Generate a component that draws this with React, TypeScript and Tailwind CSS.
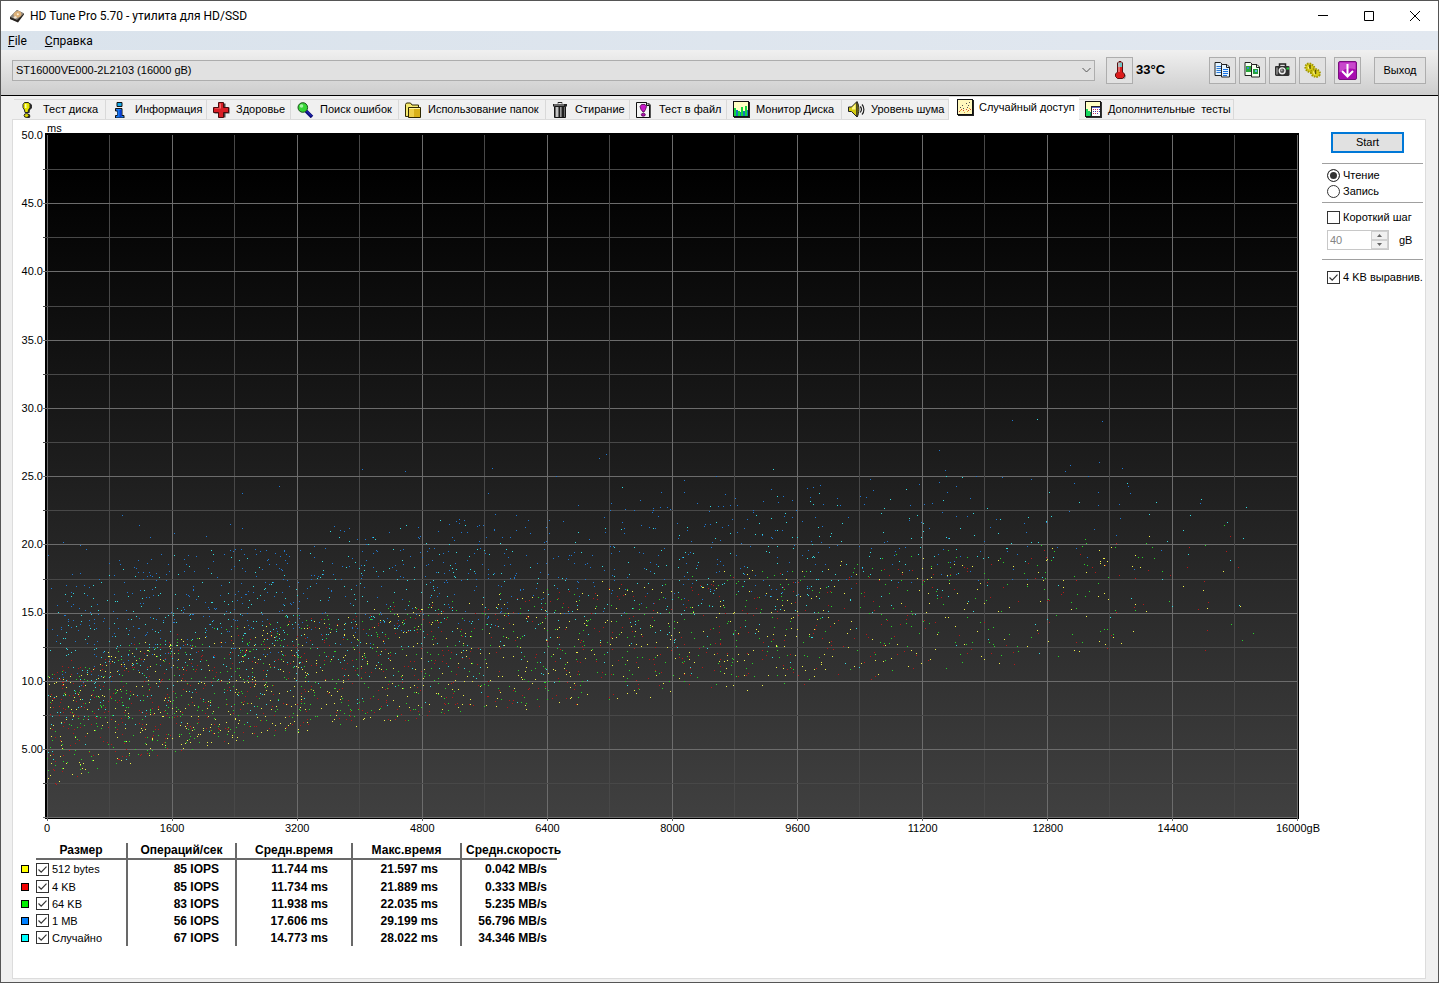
import React, { useState } from 'react';

type IconProps = { className?: string };

// ---------- icons ----------

const DiskIcon = ({ className }: IconProps) => (
  <svg className={className} viewBox="0 0 16 16" width="16" height="16">
    <path d="M1 9 8 2l7 3.500-6 8L1 11z" fill="#5a5a5a" />
    <path d="M1 9 8 2l7 3.500-7 6.500z" fill="#8b857c" />
    <path d="M1 9v2l8 3.500 6-8v-1l-7 6.500z" fill="#26221f" />
    <ellipse cx="8.500" cy="6.400" rx="4" ry="3.200" fill="#dcb078" transform="rotate(-25 8.500 6.400)" />
    <circle cx="8.800" cy="6.200" r="1" fill="#fff3dd" />
    <path d="m4 9 3-1 1 2-2 .8z" fill="#efe2d0" />
  </svg>
);

const TestIcon = () => (
  <svg viewBox="0 0 16 16" width="16" height="16">
    <path d="M6 1h4l2 2v3l-2 2-.5 3h-2L7 8 5 6V3z" fill="#333" />
    <circle cx="8" cy="14" r="2.300" fill="#333" />
    <path d="M4.500 .5h4l1.500 2v3L8.500 8 8 10.500H5L4.500 8 3 5.500v-3z" fill="#e6e600" stroke="#222" />
    <path d="M5 2h1.500v4H5z" fill="#ffffb0" />
    <ellipse cx="6.500" cy="13.500" rx="2.400" ry="1.900" fill="#e0dc00" stroke="#222" />
  </svg>
);

const InfoIcon = () => (
  <svg viewBox="0 0 16 16" width="16" height="16">
    <path d="M5 .500h5v4H5zM3.500 6.500H10v7h2v2.500H3.500v-2.500h2V9h-2z" fill="#111" stroke="#111" />
    <path d="M5.500 1h4v3h-4z" fill="#14a8e8" />
    <path d="M4 7h5.500v7h2v1.500H4V14h1.500V8.500H4z" fill="#1878f0" />
    <path d="M7.500 8h2v7h-2z" fill="#0a3bd8" />
  </svg>
);

const HealthIcon = () => (
  <svg viewBox="0 0 17 16" width="17" height="16">
    <path d="M6.500 1.500h6v4h4v6h-4v4h-6v-4h-5v-6h5z" fill="#444" />
    <path d="M5.500 .5h5v5h5v5h-5v5h-5v-5h-5v-5h5z" fill="#d81f26" stroke="#4c0a0c" />
    <path d="M6.500 1.500h1.500v5h-6V6h4.500z" fill="#ee7070" />
  </svg>
);

const SearchIcon = () => (
  <svg viewBox="0 0 17 16" width="17" height="16">
    <path d="m9 9 6 6" stroke="#0a0a78" strokeWidth="3.500" />
    <path d="m9.500 9 5 5" stroke="#2a35d0" strokeWidth="1" />
    <circle cx="5.800" cy="5.500" r="4.800" fill="#36d636" stroke="#1a4f1a" />
    <circle cx="4.500" cy="4" r="1.800" fill="#a4f5a4" />
  </svg>
);

const FolderIcon = () => (
  <svg viewBox="0 0 16 16" width="16" height="16">
    <path d="M.500 14.500v-12l1-1.500h4l1.500 2h6.500v11z" fill="#f6ea70" stroke="#2e2600" />
    <path d="M3.500 15.500v-10h12v10z" fill="#d8b018" stroke="#2e2600" />
    <path d="M4 6h5v9H4z" fill="#efcf48" />
    <path d="M4 6h11v1H4z" fill="#fff5a0" />
  </svg>
);

const TrashIcon = () => (
  <svg viewBox="0 0 16 16" width="16" height="16">
    <path d="M2.500 4.500h11v11h-11z" fill="#6c6c6c" stroke="#151515" />
    <path d="M4 5h2v10H4z" fill="#c4c4c4" />
    <path d="M7 5h1v10H7zM10 5h2v10h-2z" fill="#202020" />
    <path d="M8 5h1v10H8z" fill="#999" />
    <path d="M1 2h14v2.500H1z" fill="#222" />
    <path d="M2 2.500h10v1H2z" fill="#aaa" />
    <path d="M6 1.500V.500h4v1" fill="none" stroke="#222" />
  </svg>
);

const FileTestIcon = () => (
  <svg viewBox="0 0 16 16" width="16" height="16">
    <path d="M2 1h11l2 2v13H2z" fill="#555" />
    <path d="M.5 .5h10l3 3v12H.5z" fill="#f4f4f4" stroke="#111" />
    <path d="M10.500 .5v3h3" fill="#ccc" stroke="#111" />
    <path d="M5.500 2.500h3.500l1.500 2-1 3L8 10H7L5 7.500l-1-3z" fill="#c818c8" stroke="#480048" strokeWidth=".8" />
    <ellipse cx="7.300" cy="12.700" rx="2" ry="1.500" fill="#b010b0" stroke="#480048" strokeWidth=".8" />
  </svg>
);

const MonitorIcon = () => (
  <svg viewBox="0 0 17 17" width="17" height="17" shapeRendering="crispEdges">
    <path d="M1 1h16v16H1z" fill="#222" />
    <path d="M0 0h16v16H0z" fill="#111" />
    <path d="M1 1h14v14H1z" fill="#ffffc4" />
    <path d="M1 7h2v8H1zM5 10h2v5H5zM8 6h2v9H8zM12 5h2v10h-2z" fill="#12d83c" />
    <path d="M3 9h2v6H3zM7 11h1v4H7zM10 10h2v5h-2zM14 9h1v6h-1z" fill="#1478b8" />
  </svg>
);

const SoundIcon = () => (
  <svg viewBox="0 0 17 17" width="17" height="17">
    <path d="M.500 6v4.500h3L9 16V.5L3.500 6z" fill="#d6cc10" stroke="#222" />
    <path d="M4 6.500 7.500 3v5.500H4z" fill="#fff88a" />
    <path d="M9 1c2.500 3 2.500 11.500 0 15z" fill="#a89c00" stroke="#222" />
    <path d="M12.200 5.500c1.500 1.500 1.500 4 0 6M14 3.500c2.500 2.500 2.500 7.500 0 10" fill="none" stroke="#222" strokeWidth="1.200" />
  </svg>
);

const ScatterIcon = () => (
  <svg viewBox="0 0 17 17" width="17" height="17" shapeRendering="crispEdges">
    <path d="M1 1h16v16H1z" fill="#222" />
    <path d="M0 0h16v16H0z" fill="#111" />
    <path d="M1 1h14v14H1z" fill="#fff8bc" />
    <path d="M3 8h1v1H3zM5 6h1v1H5zM9 4h1v1H9zM11 6h1v1h-1zM12 3h1v1h-1zM6 9h1v1H6zM10 8h1v1h-1z" fill="#555" />
    <path d="M2 12h1v1H2zM4 10h1v1H4zM6 11h1v1H6zM9 10h1v1H9zM11 11h1v1h-1zM13 10h1v1h-1z" fill="#d04838" />
    <path d="M3 11h1v1H3zM7 13h1v1H7zM10 12h1v1h-1zM12 9h1v1h-1z" fill="#e8a838" />
  </svg>
);

const ExtraIcon = () => (
  <svg viewBox="0 0 17 17" width="17" height="17" shapeRendering="crispEdges">
    <path d="M1 1h16v16H1z" fill="#333" />
    <path d="M0 0h16v16H0z" fill="#111" />
    <path d="M1 1h14v14H1z" fill="#ffffc4" />
    <path d="M1 8h2v7H1zM3 10h2v5H3z" fill="#18d860" />
    <path d="M5 11h2v4H5z" fill="#089060" />
    <path d="M6 5h10v11H6z" fill="#222" />
    <path d="M7 7h8v8H7z" fill="#fff" />
    <path d="M7 6h8v1H7z" fill="#5868c8" />
    <path d="M8 8h1v1H8zM10 8h1v1h-1zM12 8h1v1h-1zM8 12h1v1H8zM10 12h1v1h-1zM12 10h1v1h-1z" fill="#c03060" />
    <path d="M8 10h1v1H8zM10 10h1v1h-1zM12 12h1v1h-1zM14 8h1v1h-1zM14 10h1v1h-1z" fill="#4040b0" />
  </svg>
);

const ThermometerIcon = () => (
  <svg viewBox="0 0 16 18" width="16" height="18">
    <path d="M9.500 1v11l2 1.500-1 3.500H4l9 .8 1-3.500-3-2V2z" fill="#888" />
    <path d="M5.500 2 7 .500h2L10.500 2v9l2 2v2.500l-2 2H5.500l-2-2V13l2-2z" fill="#dc1c1c" stroke="#5b1010" />
    <path d="M6 1.500h4V6H6z" fill="#6cc4c4" />
    <path d="M6.500 2h1v9h-1z" fill="#f6b4b4" />
  </svg>
);

const CopyTextIcon = () => (
  <svg viewBox="0 0 17 16" width="17" height="16">
    <path d="M1 .500h5.500l2 2v11H1z" fill="#e4f4ff" stroke="#222" />
    <path d="M2.500 4.500H7M2.500 6.500H7M2.500 8.500H7M2.500 10.500H7" stroke="#2878d8" />
    <path d="M7.500 2.500H13l2.500 2.500v10h-8z" fill="#e4f4ff" stroke="#222" />
    <path d="M12.500 2.500v3h3" fill="none" stroke="#222" />
    <path d="M9 7.500h5M9 9.500h5M9 11.500h5M9 13.500h4" stroke="#1870e0" />
  </svg>
);

const CopyImageIcon = () => (
  <svg viewBox="0 0 17 16" width="17" height="16">
    <path d="M1 .500h5.500l2 2v11H1z" fill="#f4fff0" stroke="#222" />
    <path d="M2 4h5v6H2z" fill="#28a838" />
    <path d="M3 5h2v2H3z" fill="#3888d0" />
    <path d="M7.500 2.500H13l2.500 2.500v10h-8z" fill="#f4fff0" stroke="#222" />
    <path d="M12.500 2.500v3h3" fill="none" stroke="#222" />
    <path d="M9 7h5v5H9z" fill="#20a040" />
    <path d="M11 8h2v2h-2z" fill="#60b8e8" />
  </svg>
);

const CameraIcon = () => (
  <svg viewBox="0 0 17 16" width="17" height="16">
    <path d="M5.500 4V2h6v2" fill="#ddd" stroke="#222" strokeWidth="1.500" />
    <path d="M1 4.500 2 4h12.500l1 .5V13l-1 1H2l-1-1z" fill="#303030" />
    <path d="M2 5.500h2v7H2z" fill="#777" />
    <circle cx="8.200" cy="8.800" r="3.600" fill="#f0f0f0" />
    <circle cx="8.200" cy="8.800" r="2.200" fill="#555" />
    <circle cx="7.700" cy="8.200" r="1" fill="#aaa" />
    <path d="M12.500 5.500H15v2h-2.500z" fill="#20d040" />
  </svg>
);

const GearsIcon = () => (
  <svg viewBox="0 0 17 17" width="17" height="17">
    <ellipse cx="6" cy="6" rx="5" ry="4" transform="rotate(40 6 6)" fill="#d8cc18" stroke="#a09600" strokeWidth="2" strokeDasharray="1.500 1" />
    <ellipse cx="11.500" cy="11" rx="4.600" ry="3.800" transform="rotate(25 11.500 11)" fill="#d8cc18" stroke="#a09600" strokeWidth="2" strokeDasharray="1.500 1" />
    <path d="M6 3v4M11.500 8v4" stroke="#5c5500" strokeWidth="1.500" />
    <path d="M4 4.500 5 7M9.500 9.500l1 3" stroke="#fff9a0" />
  </svg>
);

const DownloadIcon = () => (
  <svg viewBox="0 0 19 19" width="19" height="19">
    <rect x=".5" y=".5" width="18" height="18" rx="1.500" fill="#a80cb0" stroke="#77107c" />
    <path d="M1.500 1.500h16v7c-5-2-11-1-16 3z" fill="#c848cc" />
    <path d="M9.500 3v12.500M4 10l5.500 5.500L15 10" fill="none" stroke="#fff" strokeWidth="2" />
  </svg>
);

const CheckMark = () => (
  <svg
    className="pointer-events-none absolute inset-0 hidden peer-checked:block"
    viewBox="0 0 13 13"
    width="13"
    height="13"
  >
    <path d="m2.500 6.500 2.700 2.700 5.300-5.500" fill="none" stroke="#333" strokeWidth="1.200" />
  </svg>
);

// ---------- data ----------

const tabs = [
  { label: 'Тест диска', icon: <TestIcon />, width: 'w-[92px]' },
  { label: 'Информация', icon: <InfoIcon />, width: 'w-[101px]' },
  { label: 'Здоровье', icon: <HealthIcon />, width: 'w-[84px]' },
  { label: 'Поиск ошибок', icon: <SearchIcon />, width: 'w-[108px]' },
  { label: 'Использование папок', icon: <FolderIcon />, width: 'w-[147px]' },
  { label: 'Стирание', icon: <TrashIcon />, width: 'w-[84px]' },
  { label: 'Тест в файл', icon: <FileTestIcon />, width: 'w-[97px]' },
  { label: 'Монитор Диска', icon: <MonitorIcon />, width: 'w-[115px]' },
  { label: 'Уровень шума', icon: <SoundIcon />, width: 'w-[107px]' },
  { label: 'Случайный доступ', icon: <ScatterIcon />, width: 'w-[130px]' },
  { label: 'Дополнительные  тесты', icon: <ExtraIcon />, width: 'w-[155px]' },
];

const rows = [
  { id: 's512', size: '512 bytes', swatch: 'bg-[#ffff00]', iops: '85 IOPS', avg: '11.744 ms', max: '21.597 ms', speed: '0.042 MB/s' },
  { id: 's4k', size: '4 KB', swatch: 'bg-[#f00000]', iops: '85 IOPS', avg: '11.734 ms', max: '21.889 ms', speed: '0.333 MB/s' },
  { id: 's64k', size: '64 KB', swatch: 'bg-[#00f000]', iops: '83 IOPS', avg: '11.938 ms', max: '22.035 ms', speed: '5.235 MB/s' },
  { id: 's1m', size: '1 MB', swatch: 'bg-[#0080ff]', iops: '56 IOPS', avg: '17.606 ms', max: '29.199 ms', speed: '56.796 MB/s' },
  { id: 'rnd', size: 'Случайно', swatch: 'bg-[#00ffff]', iops: '67 IOPS', avg: '14.773 ms', max: '28.022 ms', speed: '34.346 MB/s' },
];

// extra = transfer time on top of the seek, in ms
const series = [
  { id: 's1m', color: '#1f78d2', count: 800, seed: 41, extra: 6.2, spread: 0 },
  { id: 'rnd', color: '#35dce0', count: 800, seed: 52, extra: 0, spread: 6.4 },
  { id: 's4k', color: '#b81818', count: 800, seed: 23, extra: 0, spread: 0 },
  { id: 's64k', color: '#28d428', count: 800, seed: 34, extra: 0.2, spread: 0 },
  { id: 's512', color: '#f2f24c', count: 800, seed: 15, extra: 0, spread: 0 },
];

const yLabels = ['50.0', '45.0', '40.0', '35.0', '30.0', '25.0', '20.0', '15.0', '10.0', '5.00', ''];
const xLabels = ['0', '1600', '3200', '4800', '6400', '8000', '9600', '11200', '12800', '14400', '16000gB'];

function makeRandom(seed: number) {
  let s = seed * 7919;
  return () => {
    s = (s + 0x6d2b79f5) | 0;
    let t = Math.imul(s ^ (s >>> 15), 1 | s);
    t = (t + Math.imul(t ^ (t >>> 7), 61 | t)) ^ t;
    return ((t ^ (t >>> 14)) >>> 0) / 4294967296;
  };
}

// Seek distance is triangular, latency is seek time + part of one rotation
function scatterPath(s: (typeof series)[number]) {
  const rand = makeRandom(s.seed);
  let d = '';
  for (let i = 0; i < s.count; i++) {
    const dist = 1 - Math.sqrt(rand());
    const seek = 1.5 + 8 * Math.sqrt(dist) + 3 * dist + rand() * 0.9;
    const late = rand() < 0.09 && (s.extra > 1 || s.spread) ? rand() * 5 : 0;
    const ms = Math.min(seek + rand() * 8.33 + s.extra + rand() * s.spread + late, 29.2);
    const x = Math.round(4 + dist * 1250);
    const y = Math.round(684 - ms * 13.64);
    d += `M${x} ${y}h1v1h-1z`;
  }
  return d;
}

const steps = Array.from({ length: 21 }, (_, i) => i);

// ---------- parts ----------

function ScatterChart({ visible }: { visible: Record<string, boolean> }) {
  return (
    <div className="flex min-h-0 flex-1 text-[11px] leading-3">
      <div className="flex w-[30px] shrink-0 flex-col justify-between pb-[18px] pt-3">
        {yLabels.map((label, i) => (
          <div key={i} className="flex h-0 items-center justify-end">{label}</div>
        ))}
      </div>
      <div className="flex min-w-0 flex-1 flex-col">
        <div className="h-[10px] pl-1 leading-[10px]">ms</div>
        <svg
          className="min-h-0 w-full flex-1"
          viewBox="0 0 1256 688"
          preserveAspectRatio="none"
          shapeRendering="crispEdges"
          role="img"
          aria-label="Время доступа, ms"
        >
          <defs>
            <linearGradient id="plot" x1="0" y1="0" x2="0" y2="1">
              <stop offset="0.05" stopColor="#000" />
              <stop offset="1" stopColor="#404040" />
            </linearGradient>
          </defs>
          <rect x="2" y="0" width="1254" height="686" fill="#000" />
          <rect x="4" y="2" width="1250" height="682" fill="url(#plot)" />
          {steps.map(i => (
            <g key={i} fill={i % 2 ? '#484848' : '#6c6c6c'}>
              <rect x={4 + Math.floor(i * 62.5)} y="2" width="1" height={i % 2 ? 683 : 686} />
              {i > 0 && <rect x="0" y={2 + Math.round(i * 34.12)} width="1254" height="1" />}
            </g>
          ))}
          {series.map(s => visible[s.id] && <path key={s.id} d={scatterPath(s)} fill={s.color} />)}
        </svg>
        <div className="flex h-[14px] items-center justify-between pl-1 pr-px">
          {xLabels.map(label => (
            <div key={label} className="flex w-0 justify-center whitespace-nowrap">{label}</div>
          ))}
        </div>
      </div>
    </div>
  );
}

const toolButton =
  'flex size-[27px] items-center justify-center border border-[#adadad] bg-[#e1e1e1] hover:border-[#0078d7]';
const checkBox = 'peer block size-[13px] appearance-none border border-[#333] bg-white';

const App: React.FC = () => {
  const [activeTab, setActiveTab] = useState('Случайный доступ');
  const [mode, setMode] = useState('read');
  const [shortStroke, setShortStroke] = useState(false);
  const [aligned, setAligned] = useState(true);
  const [visible, setVisible] = useState<Record<string, boolean>>({
    s512: true,
    s4k: true,
    s64k: true,
    s1m: true,
    rnd: true,
  });

  return (
    <div className="flex h-screen min-h-[600px] flex-col border border-[#555] bg-[#f0f0f0] font-['Liberation_Sans',Arial,sans-serif] text-[11px] text-black">
      {/* Title bar */}
      <header className="flex h-[30px] shrink-0 items-center bg-white pl-2 font-['Roboto','Segoe_UI',sans-serif] text-xs">
        <DiskIcon />
        <h1 className="ml-[5px] flex-1">HD Tune Pro 5.70 - утилита для HD/SSD</h1>
        <button className="flex h-full w-[46px] items-center justify-center" aria-label="Свернуть">
          <svg width="10" height="10" viewBox="0 0 10 10"><path d="M0 4.500h10" stroke="#000" /></svg>
        </button>
        <button className="flex h-full w-[46px] items-center justify-center" aria-label="Развернуть">
          <svg width="10" height="10" viewBox="0 0 10 10"><path d="M.5 .5h9v9h-9z" fill="none" stroke="#000" /></svg>
        </button>
        <button className="flex h-full w-[46px] items-center justify-center" aria-label="Закрыть">
          <svg width="10" height="10" viewBox="0 0 10 10"><path d="m0 0 10 10M10 0 0 10" stroke="#000" /></svg>
        </button>
      </header>

      {/* Menu */}
      <nav className="flex h-[19px] shrink-0 items-center gap-[18px] bg-linear-to-r from-[#dae3ec] to-[#e2e8f0] pl-[7px] font-['Roboto','Segoe_UI',sans-serif] text-xs">
        <button><span className="underline">F</span>ile</button>
        <button><span className="underline">С</span>правка</button>
      </nav>

      {/* Toolbar */}
      <div className="flex h-[46px] shrink-0 items-center border-b border-black bg-linear-to-b from-[#f0f0f0] to-[#cdcdcd] pb-[5px] pl-[11px] pr-3">
        <div className="relative min-w-0 flex-1">
          <select
            className="block h-[21px] w-full appearance-none border border-[#adadad] bg-[#e1e1e1] pl-[3px] text-[11px]"
            aria-label="Диск"
          >
            <option>ST16000VE000-2L2103 (16000 gB)</option>
          </select>
          <svg className="pointer-events-none absolute right-1 top-[7px]" width="9" height="7" viewBox="0 0 9 7">
            <path d="m.5 1 4 4 4-4" fill="none" stroke="#555" />
          </svg>
        </div>
        <button className={`${toolButton} ml-[11px]`} aria-label="Температура"><ThermometerIcon /></button>
        <span className="ml-[3px] w-[73px] text-[13px] font-bold">33°C</span>
        <div className="flex gap-[3px]">
          <button className={toolButton} aria-label="Копировать текст"><CopyTextIcon /></button>
          <button className={toolButton} aria-label="Копировать снимок"><CopyImageIcon /></button>
          <button className={toolButton} aria-label="Сохранить снимок"><CameraIcon /></button>
          <button className={toolButton} aria-label="Настройки"><GearsIcon /></button>
        </div>
        <button className={`${toolButton} ml-2`} aria-label="Свернуть в трей"><DownloadIcon /></button>
        <button className="ml-[13px] h-[27px] w-[52px] border border-[#adadad] bg-[#e1e1e1]">Выход</button>
      </div>

      <main className="flex min-h-0 flex-1 flex-col px-[11px] pb-[3px]">
        {/* Tabs */}
        <div className="flex h-[23px] shrink-0 items-end pl-0.5" role="tablist">
          {tabs.map(tab => {
            const active = tab.label === activeTab;
            return (
              <button
                key={tab.label}
                role="tab"
                aria-selected={active}
                onClick={() => setActiveTab(tab.label)}
                className={`${tab.width} flex shrink-0 items-center whitespace-pre border-t border-[#d9d9d9] ${
                  active ? 'z-10 -mb-px h-6 bg-white pb-0.5 pl-2' : 'h-5 border-r pl-1.5'
                }`}
              >
                <span className={active ? 'flex w-[22px] shrink-0' : 'flex w-[23px] shrink-0'}>{tab.icon}</span>
                {tab.label}
              </button>
            );
          })}
        </div>

        <div className="mr-px flex min-h-0 flex-1 border border-[#dcdcdc] bg-white">
          <section className="flex min-w-0 flex-1 flex-col pt-[3px]">
            <ScatterChart visible={visible} />

            <table className="mb-8 ml-2 mt-2 w-[536px] shrink-0 table-fixed border-collapse text-xs font-bold">
              <colgroup>
                <col className="w-[15px]" />
                <col className="w-[91px]" />
                <col className="w-[109px]" />
                <col className="w-[116px]" />
                <col className="w-[109px]" />
                <col />
              </colgroup>
              <thead>
                <tr className="h-4 leading-[13px]">
                  <td />
                  <th className="border-b-2 border-r-2 border-[#696969]">Размер</th>
                  <th className="border-b-2 border-r-2 border-[#696969]">Операций/сек</th>
                  <th className="border-b-2 border-r-2 border-[#696969]">Средн.время</th>
                  <th className="border-b-2 border-r-2 border-[#696969]">Макс.время</th>
                  <th className="whitespace-nowrap border-b-2 border-[#696969] pl-1 text-left">Средн.скорость</th>
                </tr>
              </thead>
              <tbody>
                {rows.map(row => (
                  <tr key={row.id} className="h-[17px] text-right leading-4 first:h-[19px]">
                    <td><span className={`block size-2 border border-black ${row.swatch}`} /></td>
                    <td className="border-r-2 border-[#696969] text-[11px] font-normal">
                      <label className="flex items-center gap-[3px]">
                        <span className="relative">
                          <input
                            type="checkbox"
                            className={checkBox}
                            checked={visible[row.id]}
                            onChange={e => setVisible({ ...visible, [row.id]: e.target.checked })}
                          />
                          <CheckMark />
                        </span>
                        {row.size}
                      </label>
                    </td>
                    <td className="border-r-2 border-[#696969] pr-4">{row.iops}</td>
                    <td className="border-r-2 border-[#696969] pr-[23px]">{row.avg}</td>
                    <td className="border-r-2 border-[#696969] pr-[22px]">{row.max}</td>
                    <td className="pr-2.5">{row.speed}</td>
                  </tr>
                ))}
              </tbody>
            </table>
          </section>

          {/* Test options */}
          <aside className="ml-[23px] mr-0.5 w-[101px] shrink-0 pt-3">
            <button className="ml-[9px] block h-[21px] w-[73px] border-2 border-[#0078d7] bg-[#e1e1e1]">Start</button>
            <fieldset className="mt-2.5 border-y border-[#a0a0a0] py-[3px] pl-[5px]">
              {[
                { id: 'read', label: 'Чтение' },
                { id: 'write', label: 'Запись' },
              ].map(item => (
                <label key={item.id} className="flex h-4 items-center gap-[3px]">
                  <input
                    type="radio"
                    name="mode"
                    className="size-[13px] appearance-none rounded-full border border-[#333] bg-white checked:bg-[#333] checked:shadow-[inset_0_0_0_2px_#fff]"
                    checked={mode === item.id}
                    onChange={() => setMode(item.id)}
                  />
                  {item.label}
                </label>
              ))}
            </fieldset>
            <div className="border-b border-[#a0a0a0] pb-[9px] pl-[5px] pt-1.5">
              <label className="flex h-4 items-center gap-[3px] whitespace-nowrap">
                <span className="relative">
                  <input
                    type="checkbox"
                    className={checkBox}
                    checked={shortStroke}
                    onChange={e => setShortStroke(e.target.checked)}
                  />
                  <CheckMark />
                </span>
                Короткий шаг
              </label>
              <div className="mt-[5px] flex items-center">
                <div className="flex h-5 w-[62px] border border-[#c8c8c8]">
                  <input
                    id="stroke"
                    className="w-0 flex-1 bg-white pl-0.5 text-[#838383]"
                    defaultValue="40"
                    disabled={!shortStroke}
                  />
                  <div className="flex w-[17px] flex-col bg-[#f0f0f0]">
                    <button className="flex flex-1 items-center justify-center border border-[#d0d0d0]" aria-label="Больше">
                      <svg width="5" height="3" viewBox="0 0 5 3"><path d="M0 3 2.500 0 5 3z" fill="#666" /></svg>
                    </button>
                    <button className="flex flex-1 items-center justify-center border border-[#d0d0d0]" aria-label="Меньше">
                      <svg width="5" height="3" viewBox="0 0 5 3"><path d="M0 0h5L2.500 3z" fill="#666" /></svg>
                    </button>
                  </div>
                </div>
                <label htmlFor="stroke" className="ml-2.5">gB</label>
              </div>
            </div>
            <label className="mt-[9px] flex h-4 items-center gap-[3px] whitespace-nowrap pl-[5px]">
              <span className="relative">
                <input
                  type="checkbox"
                  className={checkBox}
                  checked={aligned}
                  onChange={e => setAligned(e.target.checked)}
                />
                <CheckMark />
              </span>
              4 KB выравнив.
            </label>
          </aside>
        </div>
      </main>
    </div>
  );
};

export default App;
